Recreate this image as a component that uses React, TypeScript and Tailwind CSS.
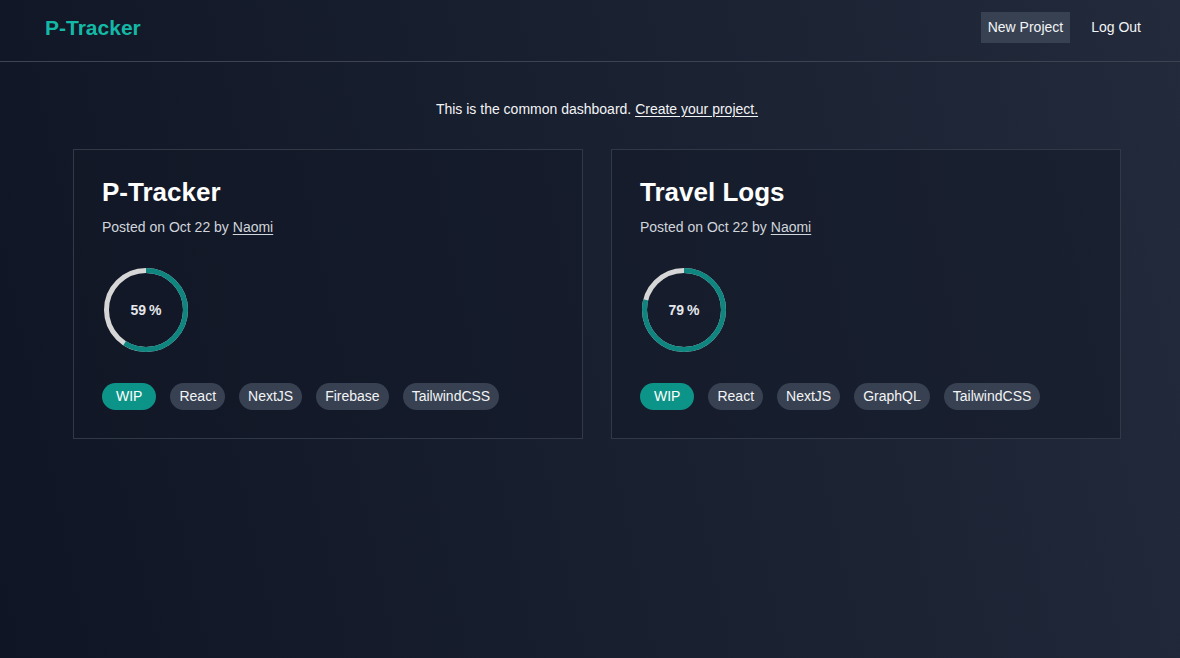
import React from "react";

type Project = {
  name: string;
  date: string;
  author: string;
  progress: number;
  tags: string[];
};

const projects: Project[] = [
  {
    name: "P-Tracker",
    date: "Oct 22",
    author: "Naomi",
    progress: 59,
    tags: ["React", "NextJS", "Firebase", "TailwindCSS"],
  },
  {
    name: "Travel Logs",
    date: "Oct 22",
    author: "Naomi",
    progress: 79,
    tags: ["React", "NextJS", "GraphQL", "TailwindCSS"],
  },
];

const Progress = ({ value }: { value: number }) => {
  const r = 39.5;
  const c = 2 * Math.PI * r;
  return (
    <div className="relative h-[84px] w-[84px]">
      <svg width="84" height="84" viewBox="0 0 84 84" className="-rotate-90">
        <circle cx="42" cy="42" r={r} fill="none" stroke="#d6d6d6" strokeWidth="5" />
        <circle
          cx="42"
          cy="42"
          r={r}
          fill="none"
          stroke="#0f8580"
          strokeWidth="5"
          strokeDasharray={c}
          strokeDashoffset={c * (1 - value / 100)}
        />
      </svg>
      <span className="absolute inset-0 flex items-center justify-center text-[14px] font-bold text-gray-200">
        {value}&thinsp;%
      </span>
    </div>
  );
};

const ProjectCard = ({ project }: { project: Project }) => (
  <div className="h-[290px] border border-[#323946] bg-[#121826]/50 px-[28px] pt-[26px]">
    <h2 className="text-[26px] font-bold leading-[32px] text-white">{project.name}</h2>
    <p className="mt-[9px] text-[14px] text-gray-300">
      Posted on {project.date} by <span className="underline underline-offset-2">{project.author}</span>
    </p>
    <div className="mt-[30px] pl-[2px]">
      <Progress value={project.progress} />
    </div>
    <div className="mt-[31px] flex gap-[14px]">
      <span className="flex h-[27px] items-center rounded-full bg-[#0d9488] px-[14px] text-[14px] text-white">
        WIP
      </span>
      {project.tags.map((tag) => (
        <span
          key={tag}
          className="flex h-[27px] items-center rounded-full bg-[#374151] px-[9px] text-[14px] text-gray-100"
        >
          {tag}
        </span>
      ))}
    </div>
  </div>
);

export default function App() {
  return (
    <div
      className="min-h-[658px] w-full bg-[linear-gradient(78deg,#0f1524,#222a3b)] text-white"
      style={{ fontFamily: '"Liberation Sans", Arial, sans-serif' }}
    >
      <header className="flex h-[62px] items-start justify-between border-b border-[#3d4350] pl-[45px] pr-[25px] pt-[12px]">
        <span className="text-[21px] font-bold leading-[31px] text-[#14b8a6]">P-Tracker</span>
        <nav className="flex items-center gap-[7px] text-[14px] text-gray-100">
          <a className="flex h-[31px] items-center bg-[#374151] px-[7px]">New Project</a>
          <a className="flex h-[31px] items-center px-[14px]">Log Out</a>
        </nav>
      </header>
      <div className="ml-[73px] w-[1048px]">
        <p className="mt-[37px] text-center text-[14px] text-gray-100">
          This is the common dashboard.{" "}
          <a className="underline underline-offset-2">Create your project.</a>
        </p>
        <main className="mt-[29px] grid grid-cols-2 gap-[28px]">
          {projects.map((p) => (
            <ProjectCard key={p.name} project={p} />
          ))}
        </main>
      </div>
    </div>
  );
}
